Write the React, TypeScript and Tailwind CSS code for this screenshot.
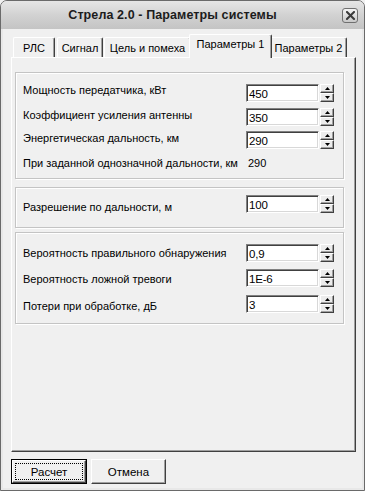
import React from "react";

function SpinArrow({ up }: { up: boolean }) {
  return (
    <svg width="5" height="3" viewBox="0 0 5 3" className="block">
      {up ? <path d="M2.5 0 L5 3 L0 3 Z" fill="#000" /> : <path d="M0 0 L5 0 L2.5 3 Z" fill="#000" />}
    </svg>
  );
}

function SpinBtn({ up }: { up: boolean }) {
  return (
    <div className="w-[14px] h-[9px] bg-[#ececec] border-t border-l border-white border-b border-r border-b-[#404040] border-r-[#404040] shadow-[inset_-1px_-1px_0_#a0a0a0] flex items-center justify-center">
      <SpinArrow up={up} />
    </div>
  );
}

function Field({ value }: { value: string }) {
  return (
    <div className="flex items-start gap-[1px]">
      <div className="w-[73px] h-[18px] bg-white border-t border-l border-[#808080] border-b border-r border-b-white border-r-white shadow-[inset_1px_1px_0_#404040,inset_-1px_-1px_0_#d8d8d8] pl-[2px] pt-[3px] text-[11.5px] leading-[13px] tracking-[-0.2px] text-black">
        {value}
      </div>
      <div className="flex flex-col">
        <SpinBtn up />
        <SpinBtn up={false} />
      </div>
    </div>
  );
}

const txt = "text-[11px] leading-[14px] whitespace-nowrap";
const ttxt = "text-[11.5px] leading-[14px] whitespace-nowrap";

function Row({ label, value, lm, mt }: { label: string; value: string; lm: string; mt: string }) {
  return (
    <div className={`flex items-start ${mt}`}>
      <div className={`w-[223px] ${txt} text-black ${lm}`}>{label}</div>
      <Field value={value} />
    </div>
  );
}

function Group({ children, cls }: { children: React.ReactNode; cls: string }) {
  return (
    <div className={`w-[329px] border border-[#c4c4c4] shadow-[inset_1px_1px_0_#ffffff,1px_1px_0_#ffffff] pl-[7px] ${cls}`}>
      {children}
    </div>
  );
}

function Tab({ label, w, active }: { label: string; w: string; active?: boolean }) {
  if (active) {
    return (
      <div className={`relative z-10 -mx-[2px] h-[24px] ${w} bg-[#f0f0f0] border-t border-l border-white border-r border-r-[#404040] shadow-[inset_-1px_0_0_#a0a0a0] rounded-t-[2px] flex justify-center pt-[2px] ${txt} -mb-[1px]`}>
        {label}
      </div>
    );
  }
  return (
    <div className={`h-[20px] ${w} bg-[#f0f0f0] border-t border-l border-white border-r border-r-[#404040] shadow-[inset_-1px_0_0_#a0a0a0] rounded-t-[2px] flex justify-center pt-[3px] ${txt}`}>
      {label}
    </div>
  );
}

export default function App() {
  return (
    <div className="w-[365px] h-[491px] bg-[#f0f0f0] font-['Liberation_Sans',Arial,sans-serif] text-black">
      <div className="w-[365px] h-[491px] border border-[#6a6a6a] rounded-t-[7px] flex flex-col bg-[#e8e8e8] overflow-hidden">
        {/* Title bar */}
        <div className="relative h-[28px] shrink-0 bg-gradient-to-b from-[#e6e6e6] via-[#d2d2d2] to-[#c4c4c4] flex items-center justify-center pr-[20px]">
          <span className="text-[12.5px] font-bold text-[#1c1c1c] tracking-[0.1px]">Стрела 2.0 - Параметры системы</span>
          <div className="absolute right-[6px] top-[7px] w-[16px] h-[15px] rounded-[3px] border border-[#707070] bg-gradient-to-b from-[#f4f4f4] to-[#c8c8c8] flex items-center justify-center">
            <svg width="9" height="9" viewBox="0 0 9 9">
              <path d="M1 1 L8 8 M8 1 L1 8" stroke="#3a3a3a" strokeWidth="2" strokeLinecap="square" />
            </svg>
          </div>
        </div>
        {/* Body */}
        <div className="flex-1 bg-[#f0f0f0] mx-[2px] mb-[2px] pl-[8px] pr-[6px] flex flex-col">
          {/* tabs */}
          <div className="flex items-end pl-[2px] mt-[4px] h-[24px]">
            <Tab label="РЛС" w="w-[42px]" />
            <div className="w-[2px]" />
            <Tab label="Сигнал" w="w-[46px]" />
            <div className="w-[1px]" />
            <Tab label="Цель и помеха" w="w-[87px]" />
            <Tab label="Параметры 1" w="w-[83px]" active />
            <Tab label="Параметры 2" w="w-[77px]" />
          </div>
          {/* panel */}
          <div className="w-[345px] h-[395px] border-t border-l border-white border-r border-b border-r-[#404040] border-b-[#404040] shadow-[inset_-1px_-1px_0_#a0a0a0] pl-[3px] pt-[14px] flex flex-col">
            <Group cls="h-[107px] pt-[11px]">
              <Row label="Мощность передатчика, кВт" value="450" lm="-mt-[1px]" mt="" />
              <Row label="Коэффициент усиления антенны" value="350" lm="" mt="mt-[6px]" />
              <Row label="Энергетическая дальность, км" value="290" lm="" mt="mt-[5px]" />
              <div className={`flex mt-[7px] ${txt}`}>
                <div className="w-[223px]">При заданной однозначной дальности, км</div>
                <div className="pl-[2px]">290</div>
              </div>
            </Group>
            <Group cls="h-[41px] pt-[7px] mt-[8px]">
              <Row label="Разрешение по дальности, м" value="100" lm="mt-[5px]" mt="" />
            </Group>
            <Group cls="h-[92px] pt-[11px] mt-[4px]">
              <Row label="Вероятность правильного обнаружения" value="0,9" lm="mt-[2px]" mt="" />
              <Row label="Вероятность ложной тревоги" value="1E-6" lm="mt-[3px]" mt="mt-[7px]" />
              <Row label="Потери при обработке, дБ" value="3" lm="mt-[4px]" mt="mt-[8px]" />
            </Group>
          </div>
          {/* buttons */}
          <div className="flex gap-[4px] mt-[7px]">
            <div className="w-[76px] h-[25px] border border-black p-0">
              <div className="w-full h-full border-t border-l border-white border-r border-b border-r-[#404040] border-b-[#404040] shadow-[inset_-1px_-1px_0_#a0a0a0] p-[2px]">
                <div className={`w-full h-full border border-dotted border-black flex items-center justify-center ${ttxt}`}>
                  Расчет
                </div>
              </div>
            </div>
            <div className={`w-[75px] h-[25px] border-t border-l border-white border-r border-b border-r-[#404040] border-b-[#404040] shadow-[inset_-1px_-1px_0_#a0a0a0] flex items-center justify-center ${ttxt}`}>
              Отмена
            </div>
          </div>
        </div>
      </div>
    </div>
  );
}
